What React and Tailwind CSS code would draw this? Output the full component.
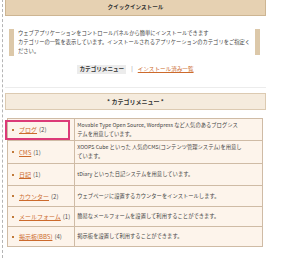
import React from 'react';

const categories = [
  { name: 'ブログ', count: 2, h: 'h-[22px]', desc: ['Movable Type Open Source, Wordpress など人気のあるブログシス', 'テムを用意しています。'] },
  { name: 'CMS', count: 1, h: 'h-[23px]', desc: ['XOOPS Cube といった 人気のCMS(コンテンツ管理システム)を用意し', 'ています。'] },
  { name: '日記', count: 1, h: 'h-[22px]', desc: ['tDiary といった日記システムを用意しています。'] },
  { name: 'カウンター', count: 2, h: 'h-[21px]', desc: ['ウェブページに設置するカウンターをインストールします。'] },
  { name: 'メールフォーム', count: 1, h: 'h-[20px]', desc: ['簡易なメールフォームを設置して利用することができます。'] },
  { name: '掲示板(BBS)', count: 4, h: 'h-[20px]', desc: ['掲示板を設置して利用することができます。'] },
];

const App = () => {
  return (
    <div
      className="w-[300px] h-[259px] bg-white overflow-hidden pl-[2px] text-[#444]"
      style={{ fontFamily: '"Noto Sans CJK JP", "Noto Sans", sans-serif' }}
    >
      <div className="h-full border-l border-dashed border-[#b5b5b5] pl-[2px]">
        <div className="w-[261px] relative">
          {/* Quick install header */}
          <div className="h-[17px] -mt-px bg-[#e6d1b2] border border-[#cdb592] flex items-center justify-center text-[5.6px] font-bold text-[#333]">
            クイックインストール
          </div>

          {/* Description */}
          <div className="mt-[13px] ml-[4px] w-[251px] flex">
            <div className="w-[5px] bg-[#dcc8a9]" />
            <p className="flex-1 pl-[4px] text-[5.3px] leading-[9px] text-[#444] whitespace-nowrap">
              ウェブアプリケーションをコントロールパネルから簡単にインストールできます
              <br />
              カテゴリーの一覧を表示しています。インストールされるアプリケーションのカテゴリをご指定く
              <br />
              ださい。
            </p>
            <div className="w-[5px] bg-[#dcc8a9] mb-px" />
          </div>

          {/* Nav */}
          <div className="mt-[9px] flex items-center justify-center gap-[5px] text-[5.6px] leading-[9px]">
            <span className="bg-[#ececec] px-[2px] font-bold text-[#333]">カテゴリメニュー</span>
            <span className="text-[#888]">|</span>
            <a href="#" className="text-[#cc6a2c] underline">インストール済み一覧</a>
          </div>

          <div className="mt-[13px] h-px bg-[#ececec]" />

          {/* Category header */}
          <div className="mt-[5px] h-[17px] bg-[#f5ebdd] border border-[#dccab1] flex items-center justify-center text-[6px] font-bold text-[#333]">
            * カテゴリメニュー *
          </div>

          {/* Category table */}
          <div className="relative mt-[8px] ml-[2px]">
            <table className="w-[256px] border-collapse bg-[#fdf4eb] text-[5.3px] leading-[9px]">
              <tbody>
                {categories.map((c) => (
                  <tr key={c.name} className={c.h}>
                    <td className="w-[66px] border border-[#cfbba5] px-[4px] py-0 align-middle whitespace-nowrap text-[6px] leading-[9px]">
                      <div className="flex items-center">
                        <span className="w-[2px] h-[2px] bg-[#c07a3a] mr-[5px]" />
                        <a href="#" className="text-[#cc6a2c] underline">{c.name}</a>
                        <span className="ml-[2px] text-[#555]">({c.count})</span>
                      </div>
                    </td>
                    <td className="border border-[#cfbba5] px-[2px] py-0 align-middle text-[5.3px] leading-[9px] text-[#444] whitespace-nowrap">
                      {c.desc.map((line, i) => (
                        <div key={i}>{line}</div>
                      ))}
                    </td>
                  </tr>
                ))}
              </tbody>
            </table>
            {/* highlight box */}
            <div className="absolute left-[-2px] top-[2px] w-[65px] h-[20px] border-2 border-[#dc3a78]" />
          </div>
        </div>
      </div>
    </div>
  );
};

export default App;
